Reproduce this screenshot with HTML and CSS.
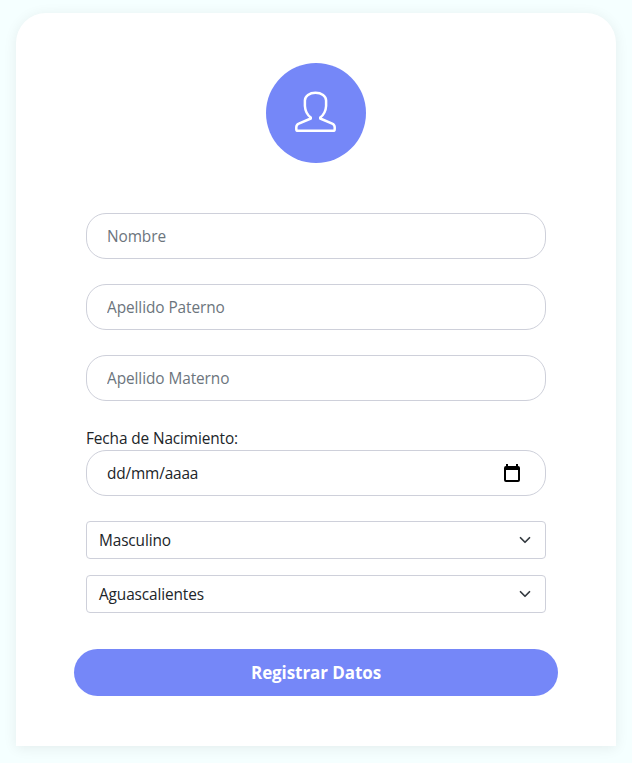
FILE: index.html
```html
<!DOCTYPE html>
<html lang="es">
<head>
<meta charset="utf-8">
<title>Registro</title>
<link rel="stylesheet" href="styles.css">
</head>
<body>
<form class="card">
  <div class="avatar">
    <svg width="42" height="42" viewBox="0 0 42 42" fill="none" stroke="#fff" stroke-width="2.5" stroke-linejoin="round">
      <path d="M15.800 26.500C12.300 24 10.200 19.500 9.900 15V9.500C9.900 5 14.500 1.700 20.500 1.700s10.600 3.300 10.600 7.800V15C30.800 19.500 28.700 24 25.200 26.500V27.500L37.200 32.700C39 33.500 39.700 34.500 39.700 36.300V38.200Q39.700 39.800 38 39.800H3Q1.300 39.800 1.300 38.200V36.300C1.300 34.500 2 33.500 3.800 32.700L15.800 27.500Z"/>
    </svg>
  </div>
  <input class="field" type="text" placeholder="Nombre">
  <input class="field" type="text" placeholder="Apellido Paterno">
  <input class="field" type="text" placeholder="Apellido Materno">
  <div class="label"><span>Fecha de Nacimiento:</span></div>
  <div class="field date"><span>dd/mm/aaaa</span>
    <svg width="16" height="18" viewBox="0 0 16 18">
      <path fill="#000" fill-rule="evenodd" d="M2 0h2v2h8V0h2v2a2 2 0 0 1 2 2v12a2 2 0 0 1-2 2H2a2 2 0 0 1-2-2V4a2 2 0 0 1 2-2ZM2 6v10h12V6Z"/>
    </svg>
  </div>
  <div class="select"><span>Masculino</span>
    <svg width="12" height="12" viewBox="0 0 16 16"><path d="m2 5 6 6 6-6" fill="none" stroke="#343a40" stroke-width="2.300" stroke-linecap="round" stroke-linejoin="round"/></svg>
  </div>
  <div class="select"><span>Aguascalientes</span>
    <svg width="12" height="12" viewBox="0 0 16 16"><path d="m2 5 6 6 6-6" fill="none" stroke="#343a40" stroke-width="2.300" stroke-linecap="round" stroke-linejoin="round"/></svg>
  </div>
  <button class="submit" type="button">Registrar Datos</button>
</form>
</body>
</html>
```
FILE: styles.css
```css
* { box-sizing: border-box; }
body {
  margin: 0;
  padding: 13px 16px 17px;
  background: #f5ffff;
  color: #212529;
  font: 15.4px/24px "Open Sans", "Noto Sans", sans-serif;
  letter-spacing: -.12px;
}
.card {
  display: flex;
  flex-direction: column;
  height: 733px;
  padding: 50px 70px;
  background: #fff;
  border-radius: 30px 30px 0 0;
  box-shadow: 0 2px 14px rgba(0, 0, 0, .075);
}
.avatar {
  display: flex;
  align-items: center;
  justify-content: center;
  align-self: center;
  width: 100px;
  height: 100px;
  margin-bottom: 50px;
  padding-bottom: 3px;
  border-radius: 50%;
  background: #7587f8;
}
.field {
  width: 100%;
  height: 46px;
  margin: 0 0 25px;
  padding: 1px 20px 0;
  border: 1px solid #ced0da;
  border-radius: 20px;
  background: #fff;
  color: #212529;
  font: inherit;
  letter-spacing: -.08px;
}
.field::placeholder { color: #6c757d; opacity: 1; }
.label { height: 24px; line-height: 25px; }
.date {
  display: flex;
  align-items: center;
  justify-content: space-between;
  padding: 0 25px 0 20px;
  letter-spacing: -.16px;
}
.date span, .select span { padding-top: 2px; }
.select {
  display: flex;
  align-items: center;
  justify-content: space-between;
  height: 38px;
  margin-bottom: 16px;
  padding: 0 14px 0 12px;
  border: 1px solid #ced0da;
  border-radius: 4px;
}
.submit {
  height: 47px;
  margin: 20px -12px 0;
  padding: 0;
  border: 0;
  border-radius: 24px;
  background: #7587f8;
  color: #fff;
  font: bold 17px/24px "Open Sans", "Noto Sans", sans-serif;
  letter-spacing: -.08px;
}
```
